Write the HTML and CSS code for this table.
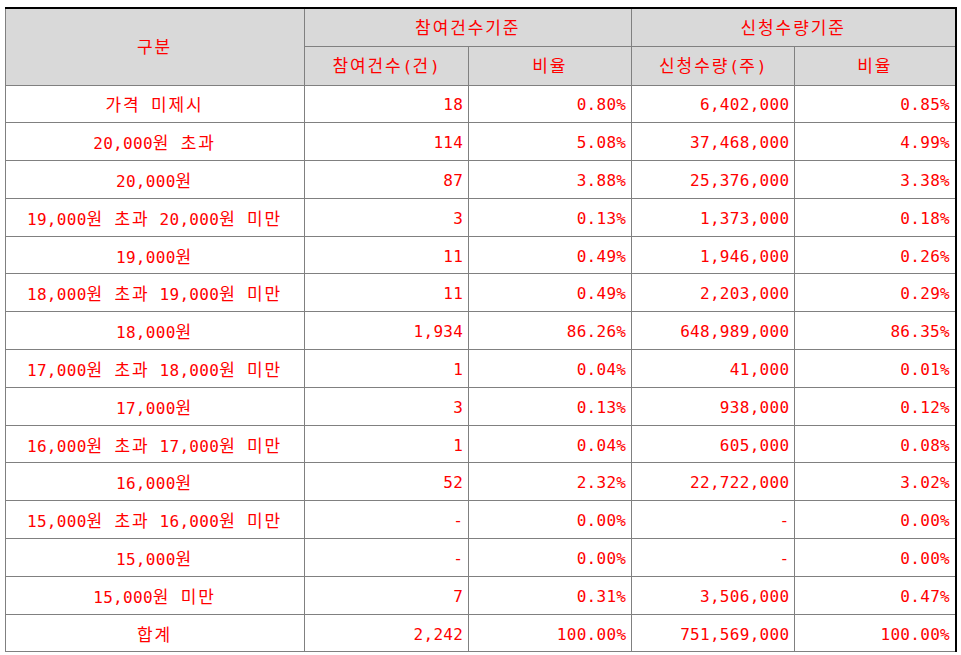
FILE: index.html
```html
<!DOCTYPE html>
<html lang="ko">
<head>
<meta charset="utf-8">
<title>수요예측 참여내역</title>
<link rel="stylesheet" href="styles.css">
</head>
<body>
<table class="grid">
  <colgroup>
    <col class="c1"><col class="c2"><col class="c3"><col class="c4"><col class="c5">
  </colgroup>
  <thead>
    <tr class="hr">
      <th rowspan="2"><span class="k">구분</span></th>
      <th colspan="2"><span class="k">참여건수기준</span></th>
      <th colspan="2"><span class="k">신청수량기준</span></th>
    </tr>
    <tr class="hr">
      <th><span class="k">참여건수</span>(<span class="k">건</span>)</th>
      <th><span class="k">비율</span></th>
      <th><span class="k">신청수량</span>(<span class="k">주</span>)</th>
      <th><span class="k">비율</span></th>
    </tr>
  </thead>
  <tbody>
    <tr><td class="lbl"><span class="k">가격 미제시</span></td><td>18</td><td>0.80%</td><td>6,402,000</td><td>0.85%</td></tr>
    <tr><td class="lbl">20,000<span class="k">원 초과</span></td><td>114</td><td>5.08%</td><td>37,468,000</td><td>4.99%</td></tr>
    <tr><td class="lbl">20,000<span class="k">원</span></td><td>87</td><td>3.88%</td><td>25,376,000</td><td>3.38%</td></tr>
    <tr><td class="lbl">19,000<span class="k">원 초과</span> 20,000<span class="k">원 미만</span></td><td>3</td><td>0.13%</td><td>1,373,000</td><td>0.18%</td></tr>
    <tr><td class="lbl">19,000<span class="k">원</span></td><td>11</td><td>0.49%</td><td>1,946,000</td><td>0.26%</td></tr>
    <tr><td class="lbl">18,000<span class="k">원 초과</span> 19,000<span class="k">원 미만</span></td><td>11</td><td>0.49%</td><td>2,203,000</td><td>0.29%</td></tr>
    <tr><td class="lbl">18,000<span class="k">원</span></td><td>1,934</td><td>86.26%</td><td>648,989,000</td><td>86.35%</td></tr>
    <tr><td class="lbl">17,000<span class="k">원 초과</span> 18,000<span class="k">원 미만</span></td><td>1</td><td>0.04%</td><td>41,000</td><td>0.01%</td></tr>
    <tr><td class="lbl">17,000<span class="k">원</span></td><td>3</td><td>0.13%</td><td>938,000</td><td>0.12%</td></tr>
    <tr><td class="lbl">16,000<span class="k">원 초과</span> 17,000<span class="k">원 미만</span></td><td>1</td><td>0.04%</td><td>605,000</td><td>0.08%</td></tr>
    <tr><td class="lbl">16,000<span class="k">원</span></td><td>52</td><td>2.32%</td><td>22,722,000</td><td>3.02%</td></tr>
    <tr><td class="lbl">15,000<span class="k">원 초과</span> 16,000<span class="k">원 미만</span></td><td>-</td><td>0.00%</td><td>-</td><td>0.00%</td></tr>
    <tr><td class="lbl">15,000<span class="k">원</span></td><td>-</td><td>0.00%</td><td>-</td><td>0.00%</td></tr>
    <tr><td class="lbl">15,000<span class="k">원 미만</span></td><td>7</td><td>0.31%</td><td>3,506,000</td><td>0.47%</td></tr>
    <tr><td class="lbl"><span class="k">합계</span></td><td>2,242</td><td>100.00%</td><td>751,569,000</td><td>100.00%</td></tr>
  </tbody>
</table>
</body>
</html>
```
FILE: styles.css
```css
html, body {
  margin: 0;
  padding: 0;
  background: #ffffff;
}
body {
  padding: 7px 0 0 5px;
}
.grid {
  border-collapse: collapse;
  table-layout: fixed;
  width: 952px;
  font-family: "DejaVu Sans Mono", "Noto Sans Mono CJK KR", "Noto Sans CJK KR", monospace;
  font-size: 16px;
  letter-spacing: 0.3px;
  color: #ff0000;
  border-top: 2px solid #000;
  border-right: 2px solid #000;
  border-left: 1px solid #000;
  border-bottom: 1px solid #000;
}
.c1 { width: 299px; }
.c2 { width: 164px; }
.c3 { width: 163px; }
.c4 { width: 163px; }
.c5 { width: 161px; }
.grid th,
.grid td {
  border: 1px solid #808080;
  padding: 1px 5px 0 4px;
  white-space: nowrap;
  line-height: 18px;
}
.grid td {
  padding-top: 3px;
}
.grid th {
  background: #d9d9d9;
  font-weight: normal;
  text-align: center;
}
.k {
  font-family: "Noto Sans Mono CJK KR", "Noto Sans CJK KR", sans-serif;
  font-size: 17px;
  letter-spacing: 1.9px;
}
.hr { height: 38.5px; }
.grid tbody tr { height: 37.8px; }
.grid td { text-align: right; }
.grid td.lbl { text-align: center; }
```
